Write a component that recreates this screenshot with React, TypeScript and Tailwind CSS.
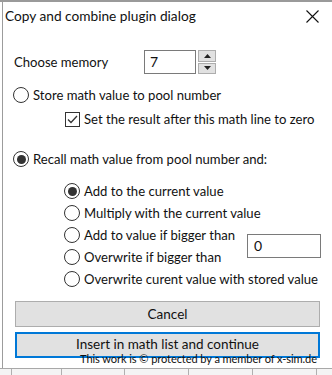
import type { ReactNode } from "react";

function Radio({ checked, children }: { checked?: boolean; children: ReactNode }) {
	return (
		<div className="flex h-[18px] items-center gap-[4px] whitespace-nowrap">
			<span className="flex h-[16px] w-[16px] shrink-0 items-center justify-center rounded-full border border-[#333333] bg-white">
				{checked && <span className="h-[9px] w-[9px] rounded-full bg-[#333333]" />}
			</span>
			<span>{children}</span>
		</div>
	);
}

function Checkbox({ checked, children }: { checked?: boolean; children: ReactNode }) {
	return (
		<div className="flex h-[18px] items-center gap-[4px] whitespace-nowrap">
			<span className="flex h-[15px] w-[15px] shrink-0 items-center justify-center border border-[#333333] bg-white">
				{checked && (
					<svg width="11" height="9" viewBox="0 0 11 9" fill="none">
						<path d="M1 4.5 L4 7.5 L10 1" stroke="#333333" strokeWidth="1.3" />
					</svg>
				)}
			</span>
			<span>{children}</span>
		</div>
	);
}

function SpinBox() {
	return (
		<div className="flex h-[24px] items-stretch gap-[2px]">
			<div className="flex w-[52px] items-center border border-[#7a7a7a] bg-white pl-[5px] text-[14px]">7</div>
			<div className="flex w-[18px] flex-col gap-[1px]">
				<button className="flex flex-1 items-center justify-center border border-[#adadad] bg-[#e1e1e1]">
					<svg width="7" height="4" viewBox="0 0 7 4">
						<path d="M0 4 L3.5 0 L7 4 Z" fill="#222" />
					</svg>
				</button>
				<button className="flex flex-1 items-center justify-center border border-[#adadad] bg-[#e1e1e1]">
					<svg width="7" height="4" viewBox="0 0 7 4">
						<path d="M0 0 L3.5 4 L7 0 Z" fill="#222" />
					</svg>
				</button>
			</div>
		</div>
	);
}

export default function App() {
	return (
		<div
			className="relative h-[375px] w-[332px] overflow-hidden bg-white text-[13.1px] leading-[18px] text-[#111]"
			style={{ fontFamily: 'Lato, "Open Sans", sans-serif' }}
		>
			<div className="h-[2px] bg-[#9a9a9a]" />
			<div className="ml-[2px] flex h-[366px] flex-col border-l border-[#9c9c9c]">
				{/* title bar */}
				<div className="flex h-[28px] items-center justify-between pl-[2px] pr-[13px]">
					<span className="whitespace-nowrap text-[13.7px]">Copy and combine plugin dialog</span>
					<svg width="13" height="13" viewBox="0 0 13 13">
						<path d="M0.5 0.5 L12.5 12.5 M12.5 0.5 L0.5 12.5" stroke="#111" strokeWidth="1.1" />
					</svg>
				</div>

				<div className="flex flex-col pl-[10px] pr-[11px]">
					<div className="mt-[20px] flex items-center">
						<span className="w-[131px] pl-[1px]">Choose memory</span>
						<SpinBox />
					</div>

					<div className="mt-[12px]">
						<Radio>Store math value to pool number</Radio>
					</div>
					<div className="mt-[6px] pl-[52px]">
						<Checkbox checked>Set the result after this math line to zero</Checkbox>
					</div>

					<div className="mt-[22px]">
						<Radio checked>Recall math value from pool number and:</Radio>
					</div>

					<div className="mt-[14px] flex flex-col gap-[4px] pl-[51px]">
						<Radio checked>Add to the current value</Radio>
						<Radio>Multiply with the current value</Radio>
						<div className="grid grid-cols-[1fr_74px] items-center gap-x-[10px] gap-y-[4px]">
							<Radio>Add to value if bigger than</Radio>
							<div className="row-span-2 flex h-[24px] items-center border border-[#7a7a7a] bg-white pl-[6px] text-[14px]">
								0
							</div>
							<Radio>Overwrite if bigger than</Radio>
						</div>
						<Radio>Overwrite curent value with stored value</Radio>
					</div>

					<div className="mt-[13px] flex flex-col gap-[5px] pl-[2px] pr-[1px]">
						<button className="h-[26px] w-full border border-[#adadad] bg-[#e1e1e1] text-[13.5px]">Cancel</button>
						<div className="relative">
							<button className="h-[26px] w-full border-2 border-[#0078d7] bg-[#e1e1e1] pb-[2px] text-[13.5px]">
								Insert in math list and continue
							</button>
							<span className="absolute right-[3px] top-[20px] whitespace-nowrap text-[11.1px] leading-[14px] tracking-[-0.1px]">
								This work is © protected by a member of x-sim.de
							</span>
						</div>
					</div>
				</div>
			</div>
			{/* background app behind the dialog */}
			<div className="flex h-[7px] border-t border-[#a8a8a8] bg-[#f4f4f4]">
				<div className="w-[12px] border-r border-[#b0b0b0]" />
				<div className="w-[50px] border-r border-[#b0b0b0]" />
				<div className="w-[63px] border-r border-[#b0b0b0]" />
				<div className="w-[64px] border-r border-[#b0b0b0]" />
				<div className="w-[64px] border-r border-[#b0b0b0]" />
				<div className="w-[64px] border-r border-[#b0b0b0]" />
			</div>
		</div>
	);
}
